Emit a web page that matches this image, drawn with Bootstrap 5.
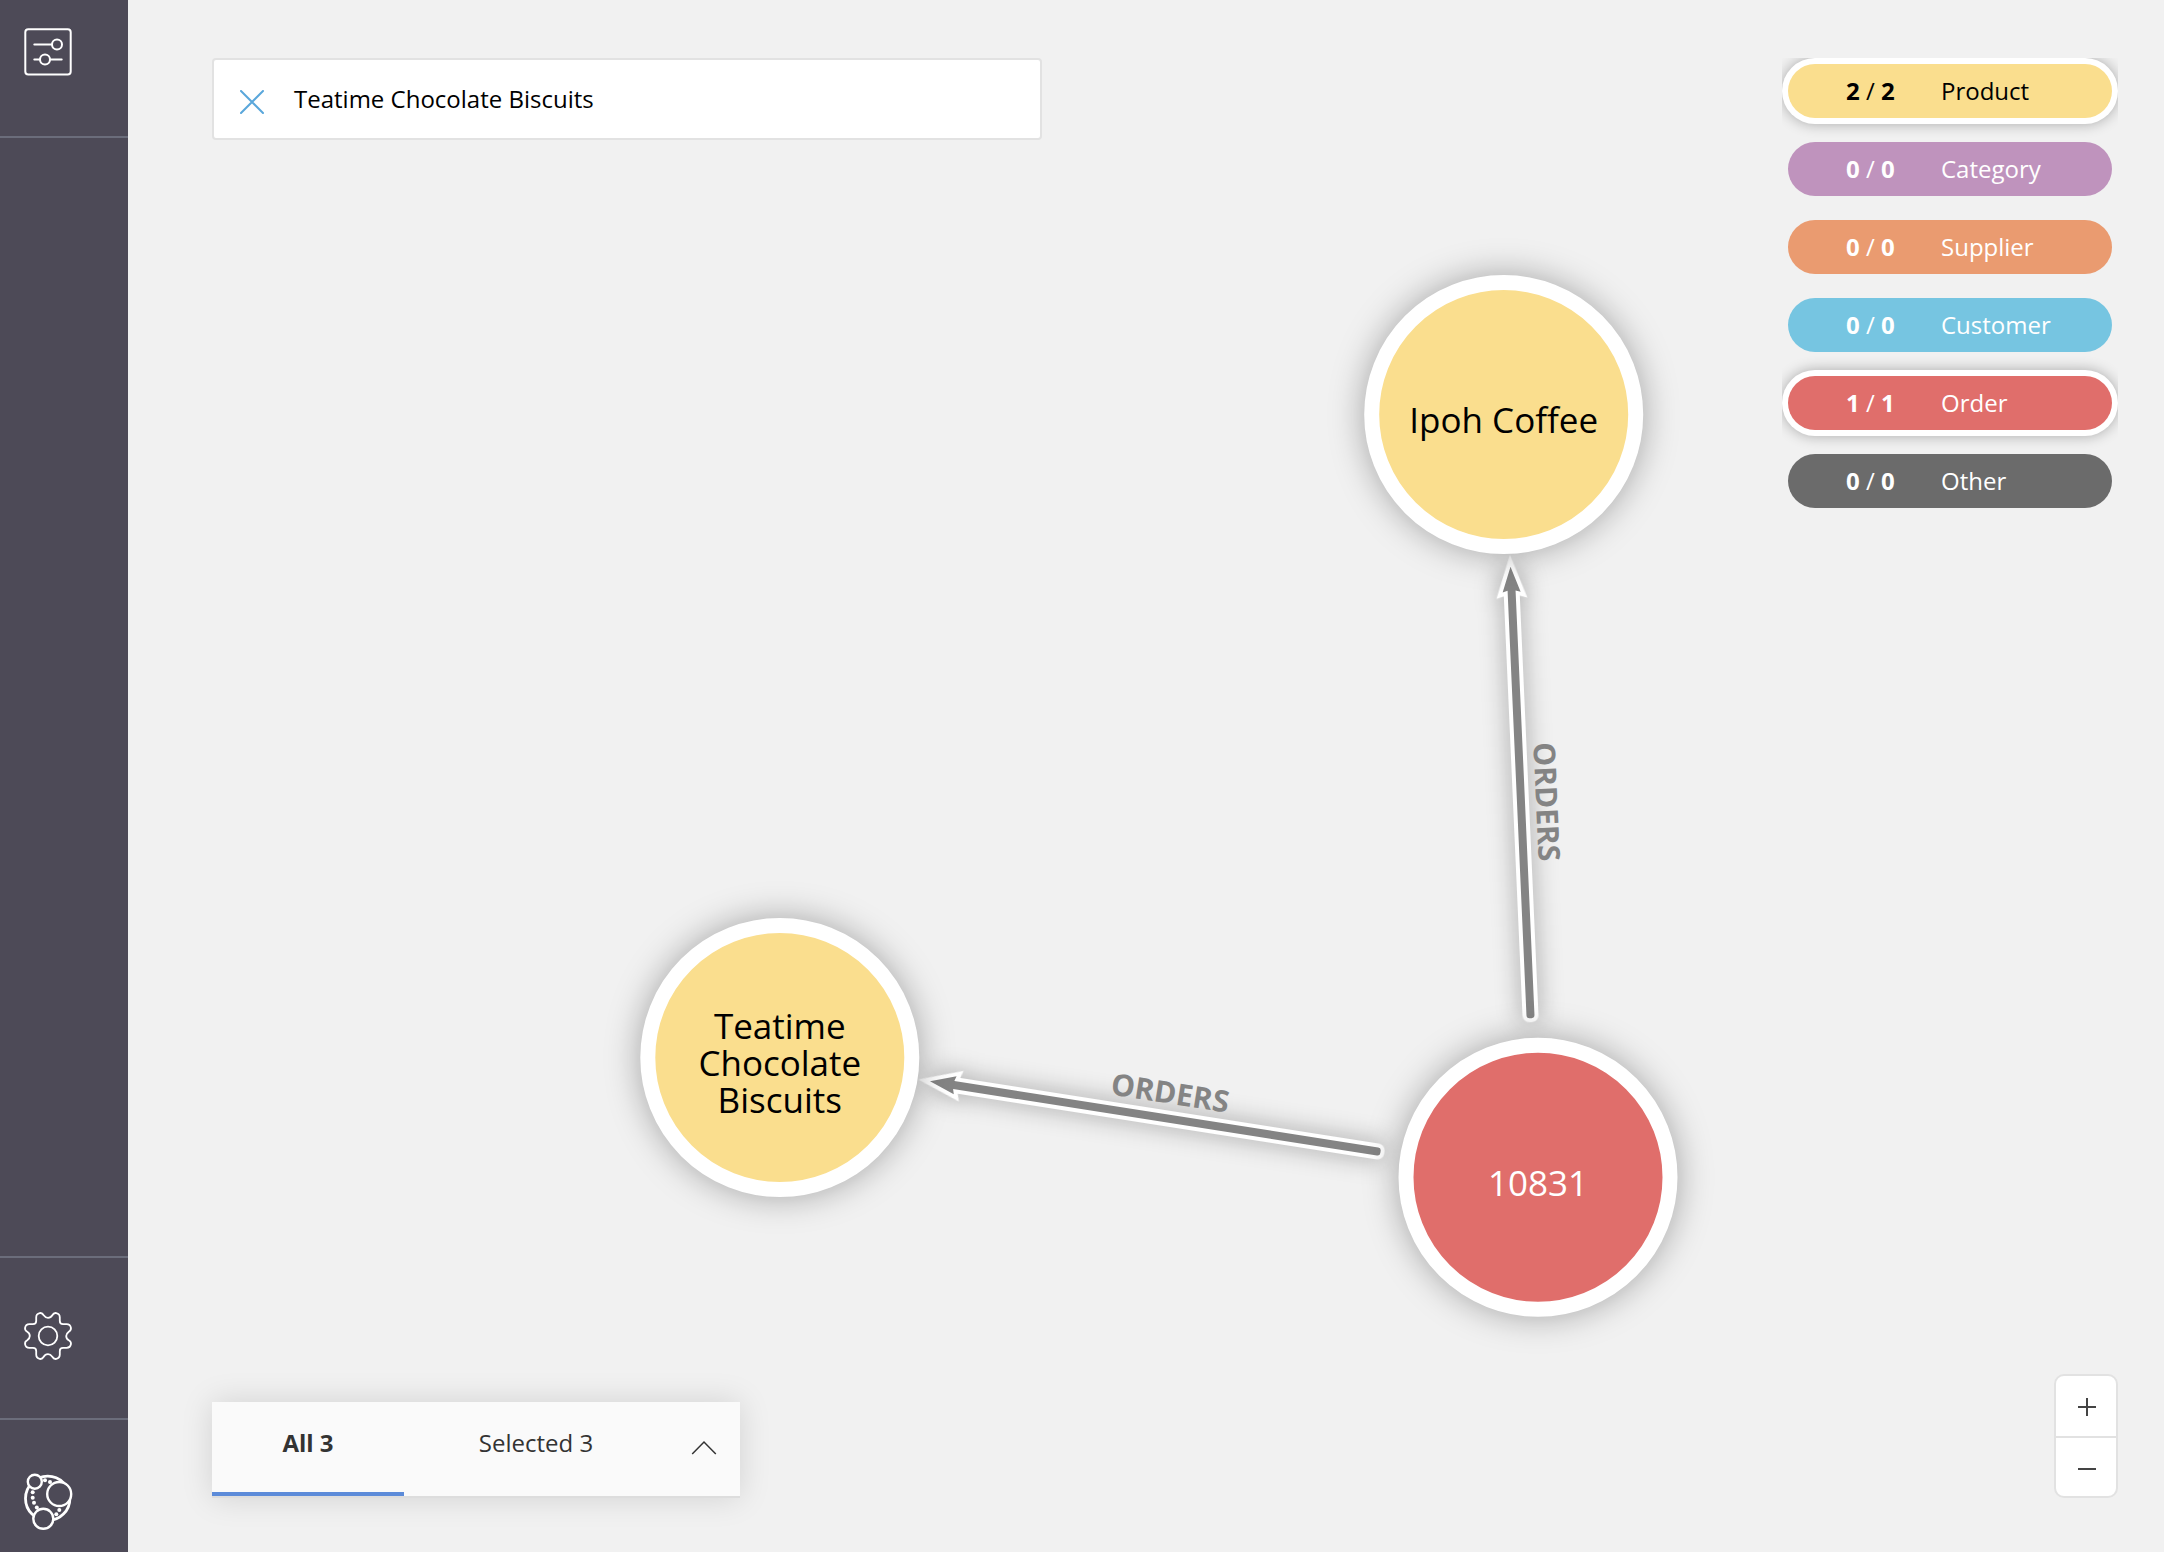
<!DOCTYPE html>
<html lang="en">
<head>
<meta charset="utf-8">
<title>Graph exploration</title>
<link rel="stylesheet" href="https://cdn.jsdelivr.net/npm/bootstrap@5.3.0/dist/css/bootstrap.min.css">
<style>
  body { font-family: "Open Sans", "Noto Sans", sans-serif; font-size: 24px; line-height: 1.5; background: #f1f1f1; color: #000; }
  .side-rail { width: 128px; background: #4d4a57; }
  .rail-cell { padding-left: 22px; border-color: #6b6d7b; border-style: solid; border-width: 0; }
  .rail-top { height: 138px; padding-top: 26px; border-bottom-width: 2px; }
  .rail-settings { height: 162px; border-top-width: 2px; padding-bottom: 4px; }
  .rail-brand { height: 134px; border-top-width: 2px; padding-top: 52px; }
  .overlay-ui { padding: 58px 46px 54px 84px; }
  .search-box { width: 830px; height: 82px; border: 2px solid #e2e2e2; border-radius: 4px; padding-left: 26px; gap: 30px; }
  .search-box svg { margin-top: 5px; }
  .legend-list { width: 336px; padding: 6px; gap: 24px; overflow: hidden; }
  .legend-chip { height: 54px; border-radius: 27px; color: #fff; }
  .legend-chip.active { box-shadow: 0 0 0 6px #fff, 0 0 14px 6px rgba(0,0,0,.3); }
  .chip-count { width: 153px; padding-left: 58px; }
  .chip-product { background: #fade8e; color: #000; }
  .chip-category { background: #bf93bd; }
  .chip-supplier { background: #ea9b70; }
  .chip-customer { background: #76c5e1; }
  .chip-order { background: #e06e6b; }
  .chip-other { background: #6b6b6b; }
  .result-tabs { width: 528px; height: 96px; background: #fafafa; border-bottom: 2px solid #ddd; box-shadow: 0 0 32px rgba(0,0,0,.13); color: #333; }
  .result-tab { padding-bottom: 12px; }
  .tab-all { width: 192px; border-bottom: 4px solid #5c8bd9; padding-bottom: 8px; }
  .tab-selected { width: 264px; }
  .tab-toggle { width: 72px; padding-bottom: 2px; }
  .zoom-control { width: 64px; height: 124px; border: 2px solid #e2e2e2; border-radius: 10px; }
  .zoom-control > div { height: 60px; padding-left: 2px; }
  .zoom-control > div:first-child { border-bottom: 2px solid #e2e2e2; height: 62px; padding-top: 2px; }
  .node-text { font-size: 35px; text-anchor: middle; }
  .edge-text { font-size: 30px; font-weight: 700; fill: #848484; text-anchor: middle; }
</style>
<script src="https://cdn.jsdelivr.net/npm/bootstrap@5.3.0/dist/js/bootstrap.bundle.min.js"></script>
</head>
<body class="vh-100 overflow-hidden">
<div class="d-flex h-100">

  <nav class="side-rail d-flex flex-column flex-shrink-0">
    <div class="rail-cell rail-top d-flex align-items-start">
      <svg width="52" height="52" viewBox="22 26 52 52" fill="none" stroke="#fff" stroke-width="2" stroke-linecap="round">
        <rect x="25.3" y="29.2" width="45.4" height="45.4" rx="3"/>
        <path d="M34.3 44.4H52M34.3 59.6H40M50 59.6H61.7"/>
        <circle cx="57" cy="44.4" r="5"/><circle cx="45" cy="59.6" r="5"/>
      </svg>
    </div>
    <div class="flex-grow-1"></div>
    <div class="rail-cell rail-settings d-flex align-items-center">
      <svg width="52" height="52" viewBox="-26 -26 52 52" fill="none" stroke="#fff" stroke-width="1.8">
        <defs><path id="cog" d="M0-18.2C2.5-18.2 3.3-19 4.3-20.8C5.3-22.6 6.8-23.2 8.3-22.9C10.9-22.4 11.8-20.6 11.8-18.6V-15C11.8-12.8 12.8-11.8 15-11.8H18.6C20.6-11.8 22.4-10.9 22.9-8.3C23.2-6.8 22.6-5.3 20.8-4.3C19-3 18.2-1.6 18.2 0"/></defs>
        <use href="#cog"/><use href="#cog" transform="rotate(90)"/><use href="#cog" transform="rotate(180)"/><use href="#cog" transform="rotate(270)"/>
        <circle r="9.3"/>
      </svg>
    </div>
    <div class="rail-cell rail-brand">
      <svg class="d-block" width="52" height="60" viewBox="22 1472 52 60" fill="#4d4a57" stroke="#fff" stroke-width="2.4">
        <circle cx="47.7" cy="1498.4" r="22.2" stroke-width="2.8"/>
        <circle cx="34.8" cy="1481.7" r="7"/><circle cx="59.2" cy="1494" r="12"/><circle cx="43.3" cy="1518.8" r="10"/>
        <g fill="#fff" stroke="none">
          <circle cx="45" cy="1480.3" r="2"/><circle cx="50" cy="1482" r="2"/>
          <circle cx="32.7" cy="1492.3" r="2"/><circle cx="32.7" cy="1497.7" r="2"/><circle cx="34" cy="1502.8" r="2"/><circle cx="36.8" cy="1507.5" r="2"/>
          <circle cx="59.3" cy="1510" r="2"/><circle cx="56.3" cy="1514.3" r="2"/>
        </g>
      </svg>
    </div>
  </nav>

  <main class="flex-grow-1 position-relative">
    <svg class="position-absolute top-0 start-0" width="2036" height="1552" viewBox="128 0 2036 1552">
      <defs>
        <filter id="node-shadow" x="-30%" y="-30%" width="160%" height="160%" color-interpolation-filters="sRGB"><feDropShadow dx="0" dy="0" stdDeviation="17" flood-color="#000" flood-opacity=".32"/></filter>
        <filter id="edge-shadow" filterUnits="userSpaceOnUse" x="-60" y="-70" width="590" height="140" color-interpolation-filters="sRGB"><feDropShadow dx="0" dy="0" stdDeviation="12" flood-color="#000" flood-opacity=".34"/></filter>
      </defs>

      <!-- relationships -->
      <g transform="translate(930 1081.3) rotate(8.91)">
        <path d="M0 0L25.5-9L24-4H453a3 3 0 0 1 3 3V1a3 3 0 0 1-3 3H24L25.5 9Z" fill="#fff" stroke="#fff" stroke-width="8" stroke-miterlimit="10" filter="url(#edge-shadow)"/>
        <path d="M0 0L25.5-9L24-4H453a3 3 0 0 1 3 3V1a3 3 0 0 1-3 3H24L25.5 9Z" fill="#848484"/>
        <text class="edge-text" x="239" y="-15">ORDERS</text>
      </g>
      <g transform="translate(1510.5 566.7) rotate(87.45)">
        <path d="M0 0L25.5-9L24-4H449a3 3 0 0 1 3 3V1a3 3 0 0 1-3 3H24L25.5 9Z" fill="#fff" stroke="#fff" stroke-width="8" stroke-miterlimit="10" filter="url(#edge-shadow)"/>
        <path d="M0 0L25.5-9L24-4H449a3 3 0 0 1 3 3V1a3 3 0 0 1-3 3H24L25.5 9Z" fill="#848484"/>
        <text class="edge-text" x="236.5" y="-15">ORDERS</text>
      </g>

      <!-- nodes -->
      <g stroke="#fff" stroke-width="15">
        <circle cx="1503.7" cy="414.5" r="132" fill="#fade8e" filter="url(#node-shadow)"/>
        <circle cx="779.8" cy="1057.5" r="132" fill="#fade8e" filter="url(#node-shadow)"/>
        <circle cx="1538" cy="1177.2" r="132" fill="#e06e6b" filter="url(#node-shadow)"/>
      </g>
      <text class="node-text" x="1503.7" y="432.7">Ipoh Coffee</text>
      <text class="node-text" x="779.8" y="1039">Teatime</text>
      <text class="node-text" x="779.8" y="1076">Chocolate</text>
      <text class="node-text" x="779.8" y="1113">Biscuits</text>
      <text class="node-text" x="1538" y="1196" fill="#fff">10831</text>
    </svg>

    <div class="overlay-ui position-relative h-100 d-flex flex-column justify-content-between">
      <div class="d-flex justify-content-between align-items-start">
        <div class="search-box bg-white d-flex align-items-center">
          <svg width="24" height="24" viewBox="0 0 24 24" stroke="#5aa7db" stroke-width="2" stroke-linecap="round"><path d="M1 1L23 23M23 1L1 23"/></svg>
          <span>Teatime Chocolate Biscuits</span>
        </div>
        <div class="legend-list d-flex flex-column">
          <div class="legend-chip chip-product active d-flex align-items-center"><span class="chip-count"><b>2</b> / <b>2</b></span><span>Product</span></div>
          <div class="legend-chip chip-category d-flex align-items-center"><span class="chip-count"><b>0</b> / <b>0</b></span><span>Category</span></div>
          <div class="legend-chip chip-supplier d-flex align-items-center"><span class="chip-count"><b>0</b> / <b>0</b></span><span>Supplier</span></div>
          <div class="legend-chip chip-customer d-flex align-items-center"><span class="chip-count"><b>0</b> / <b>0</b></span><span>Customer</span></div>
          <div class="legend-chip chip-order active d-flex align-items-center"><span class="chip-count"><b>1</b> / <b>1</b></span><span>Order</span></div>
          <div class="legend-chip chip-other d-flex align-items-center"><span class="chip-count"><b>0</b> / <b>0</b></span><span>Other</span></div>
        </div>
      </div>

      <div class="d-flex justify-content-between align-items-end">
        <div class="result-tabs d-flex">
          <div class="result-tab tab-all d-flex align-items-center justify-content-center fw-bold">All 3</div>
          <div class="result-tab tab-selected d-flex align-items-center justify-content-center">Selected 3</div>
          <div class="tab-toggle d-flex align-items-center justify-content-center">
            <svg width="26" height="16" viewBox="0 0 26 16" fill="none" stroke="#333" stroke-width="1.5"><path d="M1.2 14L13 2L24.8 14"/></svg>
          </div>
        </div>
        <div class="zoom-control bg-white">
          <div class="d-flex align-items-center justify-content-center"><svg width="18" height="18" stroke="#444" stroke-width="2"><path d="M0 9H18M9 0V18"/></svg></div>
          <div class="d-flex align-items-center justify-content-center"><svg width="18" height="18" stroke="#444" stroke-width="2"><path d="M0 10H18"/></svg></div>
        </div>
      </div>
    </div>
  </main>
</div>
</body>
</html>
